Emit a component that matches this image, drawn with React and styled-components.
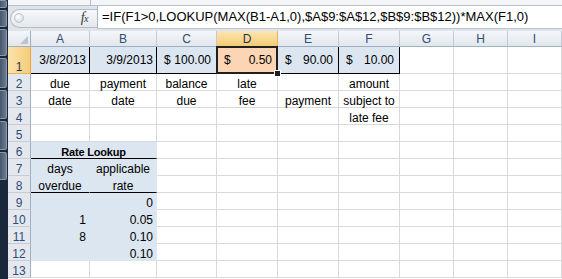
import React from 'react';
import styled, { createGlobalStyle } from 'styled-components';

const GlobalStyle = createGlobalStyle`
  html, body { margin: 0; padding: 0; background: #fff; overflow: hidden; }
  body { font-family: "Liberation Sans", Arial, sans-serif; }
`;

const BLUE = '#dce6f1';
const PEACH = '#fcd5b4';
const GRID = '#d9d9d9';

const Window = styled.div`
  display: flex;
  width: 562px;
  height: 279px;
  overflow: hidden;
`;

const SideStrip = styled.div`
  width: 8px;
  flex: none;
  background: #1a283c;
  display: flex;
  flex-direction: column;
  gap: 2px;
`;

const SideTab = styled.div`
  height: ${(p) => p.$h}px;
  flex: none;
  box-sizing: border-box;
  margin-right: 1px;
  border-radius: 0 2px 2px 0;
  background: linear-gradient(90deg, #46566c, #6d7b8f);
  border: 1px solid #8c98a9;
  border-left: none;
`;

const Main = styled.div`
  flex: 1;
  display: flex;
  flex-direction: column;
  min-width: 0;
  overflow: hidden;
`;

const TopStrip = styled.div`
  height: 6px;
  flex: none;
  box-sizing: border-box;
  display: flex;
  background: #f3f5f8;
  border-bottom: 1px solid #b9c1cb;
`;

const TopStripBox = styled.div`
  width: 82px;
  border-right: 1px solid #b4bcc6;
`;

const FormulaBar = styled.div`
  display: flex;
  flex: none;
  height: 25px;
  box-sizing: border-box;
  padding-bottom: 2px;
  background: #dfe4ea;
`;

const NameArea = styled.div`
  width: 89px;
  flex: none;
  display: flex;
  align-items: center;
  padding: 1px 0 0 2px;
  box-sizing: border-box;
`;

const Pill = styled.div`
  flex: 1;
  height: 19px;
  box-sizing: border-box;
  display: flex;
  align-items: center;
  justify-content: space-between;
  padding: 0 9px 0 3px;
  border-radius: 10px 0 0 10px;
  background: linear-gradient(#f7f8fa, #e4e8ed);
  border: 1px solid #b3bcc7;
  border-right: none;
`;

const Knob = styled.div`
  width: 10px;
  height: 10px;
  border-radius: 50%;
  box-sizing: border-box;
  background: radial-gradient(circle at 40% 35%, #ffffff, #cdd3db);
  border: 1px solid #bcc4ce;
`;

const Fx = styled.span`
  font-family: "Liberation Serif", "Times New Roman", serif;
  font-style: italic;
  font-size: 14px;
  line-height: 14px;
  color: #3a3a3a;
  letter-spacing: -0.5px;
  & small { font-size: 10px; }
`;

const FormulaInput = styled.div`
  flex: 1;
  display: flex;
  align-items: center;
  padding-left: 4px;
  background: #fff;
  border-left: 1px solid #a9b4c2;
  border-bottom: 1px solid #bcc5d0;
  font-size: 13px;
  line-height: 16px;
  color: #000;
  white-space: nowrap;
  overflow: hidden;
`;

const Sheet = styled.div`
  flex: none;
  display: grid;
  grid-template-columns: 23px 59px 67px 60px 61px 61px 61px 54px 54px 54px;
  grid-template-rows: 16px 27px;
  grid-auto-rows: 17px;
  font-size: 12px;
`;

const Corner = styled.div`
  box-sizing: border-box;
  display: flex;
  align-items: flex-end;
  justify-content: flex-end;
  padding: 0 2px 2px 0;
  background: linear-gradient(#f3f5f8, #e3e7ec);
  border-right: 1px solid #9eb0c4;
  border-bottom: 1px solid #9eb0c4;
`;

const ColHead = styled.div`
  box-sizing: border-box;
  display: flex;
  align-items: center;
  justify-content: center;
  background: ${(p) =>
    p.$sel ? 'linear-gradient(#fbe6b4, #f5cb72)' : 'linear-gradient(#f4f6f9, #e2e7ed)'};
  border-right: 1px solid ${(p) => (p.$sel ? '#e2b25c' : '#c3cad3')};
  border-bottom: 1px solid ${(p) => (p.$sel ? '#f0a434' : '#9eb0c4')};
  color: ${(p) => (p.$sel ? '#1e3454' : '#2f4d75')};
  line-height: 14px;
`;

const RowHead = styled.div`
  box-sizing: border-box;
  display: flex;
  align-items: flex-end;
  justify-content: center;
  background: ${(p) => (p.$sel ? 'linear-gradient(90deg, #fbe2ab, #f6cd78)' : '#e4e8ee')};
  border-right: 1px solid ${(p) => (p.$sel ? '#f0a434' : '#9eb0c4')};
  border-bottom: 1px solid ${(p) => (p.$sel ? '#e2b25c' : '#c5ccd5')};
  color: ${(p) => (p.$sel ? '#1e3454' : '#2f4d75')};
  line-height: 12px;
`;

const Cell = styled.div`
  box-sizing: border-box;
  position: relative;
  display: flex;
  grid-column: span ${(p) => p.$span || 1};
  align-items: ${(p) => (p.$middle ? 'center' : 'flex-end')};
  justify-content: ${(p) =>
    p.$align === 'r' ? 'flex-end' : p.$align === 'c' ? 'center' : 'flex-start'};
  padding: 0 3px;
  background: ${(p) => p.$fill || '#fff'};
  border-right: 1px solid ${(p) => p.$br || GRID};
  border-bottom: 1px solid ${(p) => p.$bb || GRID};
  color: #000;
  font-weight: ${(p) => (p.$bold ? 700 : 400)};
  font-size: ${(p) => (p.$bold ? '11px' : '12px')};
  letter-spacing: ${(p) => (p.$bold ? '-0.2px' : '0')};
  line-height: ${(p) => (p.$middle ? '14px' : '12px')};
  white-space: nowrap;

  ${(p) =>
    p.$sel &&
    `
    &::after {
      content: '';
      position: absolute;
      left: -1px;
      top: -1px;
      right: -1px;
      bottom: -1px;
      border: 2px solid #1f1f1f;
      z-index: 2;
      pointer-events: none;
    }
  `}
`;

const Handle = styled.span`
  position: absolute;
  right: -4px;
  bottom: -4px;
  width: 5px;
  height: 5px;
  background: #1f1f1f;
  border: 1px solid #fff;
  z-index: 3;
`;

const Accounting = styled.span`
  flex: 1;
  display: flex;
  justify-content: space-between;
  padding: 0 2px 0 4px;
`;

const COLS = ['A', 'B', 'C', 'D', 'E', 'F', 'G', 'H', 'I'];
const SIDE_TABS = [8, 17, 27, 30, 29, 29, 28];

const b1 = { fill: BLUE, br: '#000', bb: '#000', middle: true };
const lk = { fill: BLUE, br: BLUE, bb: BLUE };
const E = () => ({});
const blanks = (n) => Array.from({ length: n }, E);

const ROWS = [
  {
    label: '1',
    sel: true,
    cells: [
      { ...b1, t: '3/8/2013', a: 'r' },
      { ...b1, t: '3/9/2013', a: 'r' },
      { ...b1, acc: '100.00' },
      { ...b1, fill: PEACH, acc: '0.50', sel: true },
      { ...b1, acc: '90.00' },
      { ...b1, acc: '10.00' },
      ...blanks(3),
    ],
  },
  {
    label: '2',
    cells: [
      { t: 'due', a: 'c' },
      { t: 'payment', a: 'c' },
      { t: 'balance', a: 'c' },
      { t: 'late', a: 'c' },
      {},
      { t: 'amount', a: 'c' },
      ...blanks(3),
    ],
  },
  {
    label: '3',
    cells: [
      { t: 'date', a: 'c' },
      { t: 'date', a: 'c' },
      { t: 'due', a: 'c' },
      { t: 'fee', a: 'c' },
      { t: 'payment', a: 'c' },
      { t: 'subject to', a: 'c' },
      ...blanks(3),
    ],
  },
  { label: '4', cells: [...blanks(5), { t: 'late fee', a: 'c' }, ...blanks(3)] },
  { label: '5', cells: blanks(9) },
  {
    label: '6',
    cells: [{ ...lk, bb: '#000', span: 2, t: 'Rate Lookup', a: 'c', bold: true }, ...blanks(7)],
  },
  {
    label: '7',
    cells: [{ ...lk, t: 'days', a: 'c' }, { ...lk, t: 'applicable', a: 'c' }, ...blanks(7)],
  },
  {
    label: '8',
    cells: [
      { ...lk, bb: '#000', t: 'overdue', a: 'c' },
      { ...lk, bb: '#000', t: 'rate', a: 'c' },
      ...blanks(7),
    ],
  },
  { label: '9', cells: [{ ...lk }, { ...lk, t: '0', a: 'r' }, ...blanks(7)] },
  { label: '10', cells: [{ ...lk, t: '1', a: 'r' }, { ...lk, t: '0.05', a: 'r' }, ...blanks(7)] },
  { label: '11', cells: [{ ...lk, t: '8', a: 'r' }, { ...lk, t: '0.10', a: 'r' }, ...blanks(7)] },
  { label: '12', cells: [{ ...lk }, { ...lk, t: '0.10', a: 'r' }, ...blanks(7)] },
  { label: '13', cells: blanks(9) },
];

function SheetCell({ c }) {
  return (
    <Cell
      $fill={c.fill}
      $br={c.br}
      $bb={c.bb}
      $align={c.a}
      $middle={c.middle}
      $bold={c.bold}
      $span={c.span}
      $sel={c.sel}
    >
      {c.acc ? (
        <Accounting>
          <span>$</span>
          <span>{c.acc}</span>
        </Accounting>
      ) : (
        c.t
      )}
      {c.sel && <Handle />}
    </Cell>
  );
}

export default function App() {
  return (
    <>
      <GlobalStyle />
      <Window>
        <SideStrip>
          {SIDE_TABS.map((h, i) => (
            <SideTab key={i} $h={h} />
          ))}
        </SideStrip>
        <Main>
          <TopStrip>
            <TopStripBox />
          </TopStrip>
          <FormulaBar>
            <NameArea>
              <Pill>
                <Knob />
                <Fx>
                  f<small>x</small>
                </Fx>
              </Pill>
            </NameArea>
            <FormulaInput>=IF(F1&gt;0,LOOKUP(MAX(B1-A1,0),$A$9:$A$12,$B$9:$B$12))*MAX(F1,0)</FormulaInput>
          </FormulaBar>
          <Sheet>
            <Corner>
              <svg width="8" height="8" viewBox="0 0 8 8">
                <polygon points="8,0 8,8 0,8" fill="#bcc3cc" />
              </svg>
            </Corner>
            {COLS.map((c) => (
              <ColHead key={c} $sel={c === 'D'}>
                {c}
              </ColHead>
            ))}
            {ROWS.map((r) => (
              <React.Fragment key={r.label}>
                <RowHead $sel={r.sel}>{r.label}</RowHead>
                {r.cells.map((c, i) => (
                  <SheetCell key={i} c={c} />
                ))}
              </React.Fragment>
            ))}
          </Sheet>
        </Main>
      </Window>
    </>
  );
}
